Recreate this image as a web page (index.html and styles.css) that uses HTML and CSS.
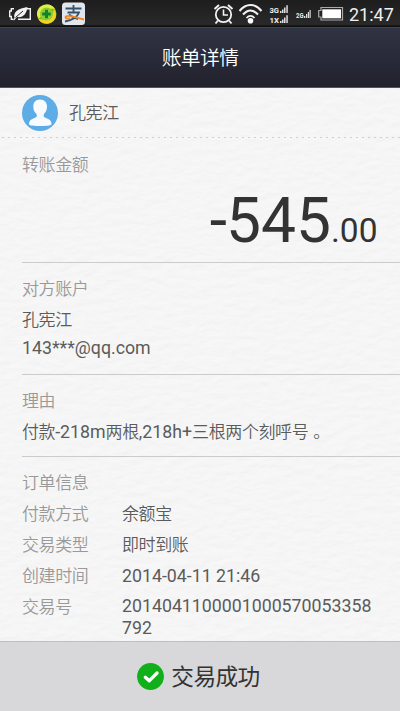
FILE: index.html
```html
<!DOCTYPE html>
<html lang="zh-CN">
<head>
<meta charset="utf-8">
<title>账单详情</title>
<link rel="stylesheet" href="styles.css">
</head>
<body>
<div class="screen">
  <div class="status">
    <svg class="status-left" width="90" height="27" viewBox="0 0 90 27">
      <g fill="none" stroke="#f2f2f2" stroke-width="1.4">
        <path d="M14 8.700H11.300V11H9.700V16.500H11.300V19.300H13M26 8.700H30.300V19.300H18"/>
      </g>
      <path d="M14.500 18C13 12 18 8.500 27.500 7C26.500 14 23 18 17 17L14 20.500L13 19.500Z" fill="#f2f2f2"/>
      <path d="M15.500 17.500L23 11" stroke="#222" stroke-width="1"/>
      <circle cx="46.700" cy="14" r="9.800" fill="#74bd28"/>
      <path d="M37 14A9.800 9.800 0 0 1 55 9C49 8 43 10 40 18C38 18 37 16 37 14Z" fill="#e5ee45"/>
      <path d="M38 18C45 22 52 18 54 9C59 16 54 24 46 23.800C42 23.500 39 21 38 18Z" fill="#f2d321"/>
      <circle cx="46.500" cy="14" r="6.500" fill="#8dcc35"/>
      <path d="M45 9.700h3v2.800h2.800v3h-2.800v2.800h-3v-2.800h-2.800v-3h2.800z" fill="#148226"/>
      <rect x="62" y="2.500" width="23" height="22.500" rx="3.500" fill="#e1e6ec"/>
      <g fill="none" stroke="#34516b" stroke-width="1.800">
        <path d="M65.500 8.500H81.500M73.500 5V12.500M67.500 12.500H79C77.500 17 73 20 65 21.500M69 14.500C72 17 75 18.500 78 19"/>
      </g>
      <path d="M70 18C67 19.500 64.500 18 66 16.500C69 14 75 17.500 84 19.500" fill="none" stroke="#f28622" stroke-width="1.900"/>
    </svg>
    <div class="status-right">
      <svg width="146" height="27" viewBox="200 0 146 27">
        <g fill="none" stroke="#f2f2f2">
          <circle cx="223.500" cy="14.500" r="7.700" stroke-width="1.800"/>
          <path d="M223.500 9.500V15H228" stroke-width="1.600"/>
          <path d="M214.500 9L219 5M228 5L232.500 9M218 20.500L215.500 23.500M229 20.500L231.500 23.500" stroke-width="1.900"/>
          <path d="M239.500 11C246 3 255 3 261.500 11" stroke-width="2"/>
          <path d="M243 14.500C248 9 253 9 258 14.500" stroke-width="2"/>
          <path d="M246.500 18C249 15.200 252 15.200 254.500 18" stroke-width="1.800"/>
        </g>
        <circle cx="250.500" cy="20.700" r="2.800" fill="#fff"/>
        <g class="tiny">
          <text x="269.500" y="13" textLength="9.500" lengthAdjust="spacingAndGlyphs">3G</text>
          <text x="269.500" y="23" textLength="9.500" lengthAdjust="spacingAndGlyphs">1X</text>
          <text class="small" x="296" y="17.800" textLength="7.500" lengthAdjust="spacingAndGlyphs">2G</text>
        </g>
        <path d="M280 11h1.500v2h-1.500zM282 9.500h1.500v3.500h-1.500zM284 7.500h1.500v5.500h-1.500zM286.300 5.300h1.500v7.700h-1.500zM280 21h1.500v2h-1.500zM282 19.500h1.500v3.500h-1.500zM284 17.500h1.500v5.500h-1.500zM286.300 15.300h1.500v7.700h-1.500zM304 16h1.300v2h-1.300zM306 14h1.200v4h-1.200zM307.800 12h1.200v6h-1.200zM309.500 10h1.200v8h-1.200z" fill="#ddd"/>
        <path d="M321 7.500H342.500V20H321V17H318.700V10.500H321Z" fill="none" stroke="#aaa" stroke-width="1.200"/>
        <rect x="322.300" y="9.300" width="18.700" height="9" fill="#fff"/>
      </svg>
      <span class="clock">21:47</span>
    </div>
  </div>
  <header class="header"><h1>账单详情</h1></header>
  <main class="paper">
    <svg class="grain" width="400" height="553">
      <filter id="grain" x="0" y="0" width="100%" height="100%" color-interpolation-filters="sRGB">
        <feTurbulence type="fractalNoise" baseFrequency="0.07 0.14" numOctaves="3" seed="4" result="n"/>
        <feColorMatrix in="n" values="0 0 0 0 .96  0 0 0 0 .96  0 0 0 0 .96  1 0 0 0 0" result="h"/>
        <feDiffuseLighting in="h" surfaceScale="0.65" diffuseConstant="1.1" lighting-color="#ffffff">
          <feDistantLight azimuth="250" elevation="61"/>
        </feDiffuseLighting>
      </filter>
      <rect width="400" height="553" opacity="0.13" filter="url(#grain)"/>
    </svg>
    <div class="content">
      <div class="person">
        <svg width="36" height="36" viewBox="0 0 36 36">
          <circle cx="18" cy="18" r="18" fill="#5dace6"/>
          <path d="M18 4.500C22.500 4.500 25 7.500 25 11.500C25 15 23.700 17.300 22 19C21 21.500 22 22.300 24.500 23.200C28 24.200 29.500 26 29.500 29.200C29.500 30.500 23 31 18 31S7 30.500 7 29.200C7 26 8.500 24.200 12 23.200C14.500 22.300 15.500 21.500 14.500 19C12.500 17.300 11.300 15 11.300 11.500C11.300 7.500 13.500 4.500 18 4.500Z" fill="#f7fbfe"/>
        </svg>
        <span class="name">孔宪江</span>
      </div>
      <section class="block amount-block">
        <div class="row label">转账金额</div>
        <div class="amount"><span class="minus">-</span>545<span class="cents">.00</span></div>
      </section>
      <section class="block account">
        <div class="row label">对方账户</div>
        <div class="row">孔宪江</div>
        <div class="row mail num">143***@qq.com</div>
      </section>
      <section class="block reason">
        <div class="row label">理由</div>
        <div class="row">付款<span class="num">-218m</span>两根<span class="num">,218h+</span>三根两个刻呼号<span class="stop">。</span></div>
      </section>
      <section class="block order">
        <div class="row label">订单信息</div>
        <div class="pair"><span class="label">付款方式</span><span>余额宝</span></div>
        <div class="pair"><span class="label">交易类型</span><span>即时到账</span></div>
        <div class="pair"><span class="label">创建时间</span><span class="num">2014-04-11 21:46</span></div>
        <div class="pair"><span class="label">交易号</span><span class="num id">2014041100001000570053358<br>792</span></div>
      </section>
    </div>
  </main>
  <footer class="footer">
    <svg width="27" height="27" viewBox="0 0 27 27">
      <circle cx="13.500" cy="13.500" r="13.400" fill="#11b01b"/>
      <path d="M8.300 14.200L12.200 17.800L20 10" fill="none" stroke="#fff" stroke-width="3.300" stroke-linecap="round" stroke-linejoin="round"/>
    </svg>
    <span class="result">交易成功</span>
  </footer>
</div>
</body>
</html>
```
FILE: styles.css
```css
* { box-sizing: border-box; }
body { margin: 0; font-family: Roboto, "Noto Sans CJK SC", sans-serif; }
.screen {
  width: 400px;
  height: 711px;
  display: flex;
  flex-direction: column;
  overflow: hidden;
  background: #f5f5f5;
}
.status {
  height: 27px;
  flex: none;
  display: flex;
  justify-content: space-between;
  background: linear-gradient(#1d1d1d, #292929 90%, #080808);
}
.status svg { display: block; }
.status-right { display: flex; width: 200px; }
.clock {
  color: #f0f0f0;
  font-size: 18px;
  line-height: 29px;
  margin-left: 3px;
  white-space: nowrap;
}
.tiny text {
  font: bold 8px Roboto, sans-serif;
  fill: #eee;
}
.tiny .small { font-size: 6.5px; }
.header {
  height: 61px;
  flex: none;
  background: linear-gradient(#303344, #22222d);
  border-top: 1px solid #454552;
  border-bottom: 1px solid #55555b;
  text-align: center;
}
h1 {
  margin: 0;
  color: #fff;
  font-size: 19.8px;
  font-weight: 350;
  letter-spacing: -0.6px;
  line-height: 61px;
}
.paper { position: relative; height: 553px; flex: none; overflow: hidden; background: #f6f6f6; }
.grain { position: absolute; left: 0; top: 0; }
.content {
  position: relative;
  color: #5b5b5b;
  font-size: 17px;
  font-weight: 350;
  letter-spacing: -0.4px;
}
.person {
  height: 51px;
  padding: 0 0 1px 22px;
  display: flex;
  align-items: center;
  gap: 11px;
  background: radial-gradient(circle, #cfcfcf 0.8px, transparent 1.1px) 0 100% / 6px 3px repeat-x;
}
.name { padding-bottom: 3px; }
.block {
  margin-left: 22px;
  border-bottom: 1px solid #cbcbcb;
}
.row { height: 31px; line-height: 31px; white-space: nowrap; }
.label { color: #999; }
.num { font-size: 17.75px; font-weight: 400; letter-spacing: 0; }
.amount-block { height: 124px; padding-top: 11px; }
.amount {
  color: #333;
  font-size: 62.3px;
  line-height: 72px;
  margin-top: 4px;
  padding-right: 22.5px;
  text-align: right;
  letter-spacing: 0;
  font-weight: 400;
}
.minus { margin-right: -1px; }
.cents { font-size: 33.5px; }
.account { height: 112px; padding-top: 11px; }
.mail { line-height: 25px; }
.reason { height: 82px; padding-top: 11px; }
.stop { margin-left: 5px; }
.order { border: 0; padding-top: 11px; }
.pair {
  display: grid;
  grid-template-columns: 100px 1fr;
  line-height: 31px;
}
.pair .id { line-height: 21.5px; padding-top: 4px; }
.footer {
  height: 70px;
  flex: none;
  display: flex;
  align-items: center;
  justify-content: center;
  gap: 7px;
  padding-right: 3px;
  background: #d8d8da;
  border-top: 1px solid #bebec1;
  color: #333;
  font-size: 22.7px;
  letter-spacing: -0.6px;
}
.result { padding-bottom: 2px; }
```
